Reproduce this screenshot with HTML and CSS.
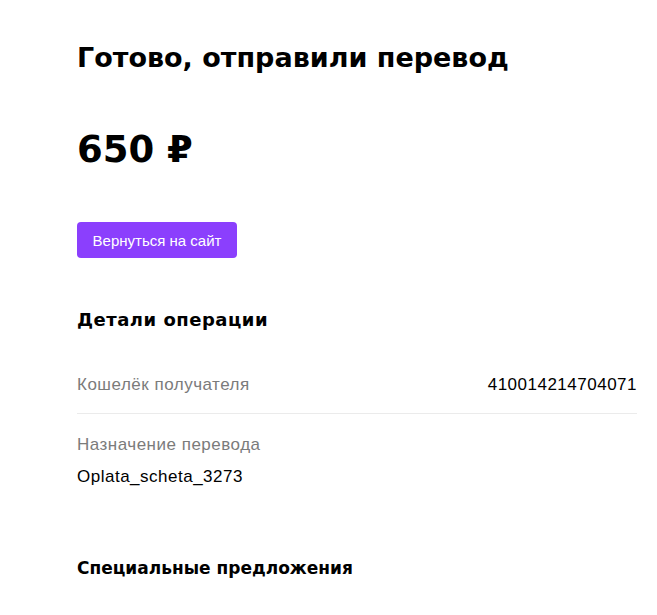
FILE: index.html
```html
<!DOCTYPE html>
<html lang="ru">
<head>
	<meta charset="UTF-8">
	<title>Перевод отправлен</title>
	<link rel="stylesheet" href="styles.css">
</head>
<body>
	<div class="page">
		<h1 class="title">Готово, отправили перевод</h1>
		<div class="amount">650 ₽</div>
		<button type="button" class="back">Вернуться на сайт</button>

		<h2 class="section details">Детали операции</h2>
		<div class="row">
			<span class="label">Кошелёк получателя</span>
			<span class="value">410014214704071</span>
		</div>
		<div class="row column">
			<span class="label">Назначение перевода</span>
			<span class="value">Oplata_scheta_3273</span>
		</div>

		<h2 class="section offers">Специальные предложения</h2>
	</div>
</body>
</html>
```

FILE: styles.css
```css
body {
	margin: 0;
	background: #fff;
	color: #000;
	font-family: "Liberation Sans", Arial, sans-serif;
}
.page {
	width: 560px;
	padding: 40px 0 0 77px;
}
.title {
	margin: 0;
	font-family: "DejaVu Sans", sans-serif;
	font-size: 27px;
	line-height: 35px;
	font-weight: 700;
}
.amount {
	margin-top: 51px;
	font-family: "DejaVu Sans", sans-serif;
	font-size: 37px;
	line-height: 48px;
	font-weight: 700;
}
.back {
	margin-top: 48px;
	width: 160px;
	height: 36px;
	border: 0;
	border-radius: 4px;
	background: #8b3ffd;
	color: #fff;
	font-family: "Liberation Sans", Arial, sans-serif;
	font-size: 15px;
	cursor: pointer;
}
.section {
	margin: 50px 0 0;
	font-family: "DejaVu Sans", sans-serif;
	font-size: 17px;
	line-height: 24px;
	font-weight: 700;
}
.details {
	font-size: 18px;
	letter-spacing: 0.5px;
}
.section + .row {
	margin-top: 25px;
}
.row {
	display: flex;
	justify-content: space-between;
	padding: 18px 0;
	font-size: 17px;
	line-height: 20px;
	letter-spacing: 0.5px;
}
.row + .row {
	border-top: 1px solid #ebebeb;
	padding-top: 21px;
}
.row.column {
	flex-direction: column;
	gap: 12px;
}
.label {
	color: #7b7b7b;
}
.offers {
	margin-top: 51px;
}
```
